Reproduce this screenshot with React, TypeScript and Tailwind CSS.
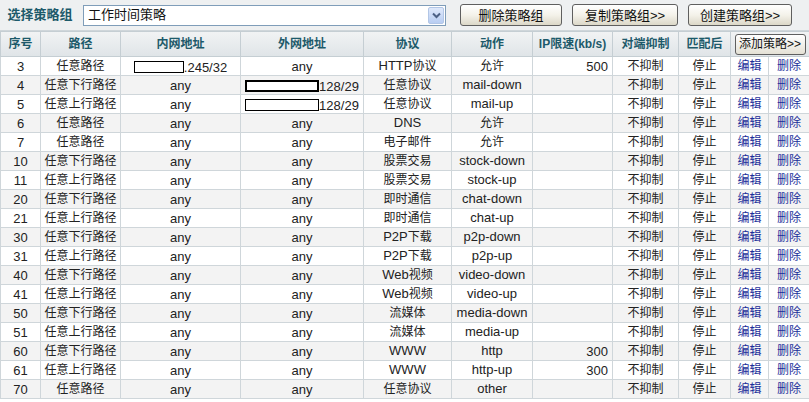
import React from "react";

type Row = {
  id: number;
  path: string;
  inner: React.ReactNode;
  outer: React.ReactNode;
  proto: string;
  action: string;
  limit?: string;
};

// latin runs a touch larger than the CJK ones, like the old Tahoma + SimSun mix
const Mixed = ({ s }: { s: string }) => (
  <>
    {s.split(/([\u4e00-\u9fff]+)/).map((part, i) =>
      /[\u4e00-\u9fff]/.test(part) ? (
        <span key={i} className="text-[12px]">{part}</span>
      ) : (
        <span key={i} className="text-[13px]">{part}</span>
      )
    )}
  </>
);

const Redacted = ({ w, thick, suffix }: { w: number; thick?: boolean; suffix: string }) => (
  <span className="inline-flex items-center h-[15px] leading-none align-middle">
    <span
      className={`inline-block h-[12px] bg-white border-black ${thick ? "border-2" : "border"}`}
      style={{ width: w }}
    />
    <span className="text-[13px]">{suffix}</span>
  </span>
);

const rows: Row[] = [
  { id: 3, path: "任意路径", inner: <Redacted w={50} suffix=".245/32" />, outer: "any", proto: "HTTP协议", action: "允许", limit: "500" },
  { id: 4, path: "任意下行路径", inner: "any", outer: <Redacted w={74} thick suffix="128/29" />, proto: "任意协议", action: "mail-down" },
  { id: 5, path: "任意上行路径", inner: "any", outer: <Redacted w={74} suffix="128/29" />, proto: "任意协议", action: "mail-up" },
  { id: 6, path: "任意路径", inner: "any", outer: "any", proto: "DNS", action: "允许" },
  { id: 7, path: "任意路径", inner: "any", outer: "any", proto: "电子邮件", action: "允许" },
  { id: 10, path: "任意下行路径", inner: "any", outer: "any", proto: "股票交易", action: "stock-down" },
  { id: 11, path: "任意上行路径", inner: "any", outer: "any", proto: "股票交易", action: "stock-up" },
  { id: 20, path: "任意下行路径", inner: "any", outer: "any", proto: "即时通信", action: "chat-down" },
  { id: 21, path: "任意上行路径", inner: "any", outer: "any", proto: "即时通信", action: "chat-up" },
  { id: 30, path: "任意下行路径", inner: "any", outer: "any", proto: "P2P下载", action: "p2p-down" },
  { id: 31, path: "任意上行路径", inner: "any", outer: "any", proto: "P2P下载", action: "p2p-up" },
  { id: 40, path: "任意下行路径", inner: "any", outer: "any", proto: "Web视频", action: "video-down" },
  { id: 41, path: "任意上行路径", inner: "any", outer: "any", proto: "Web视频", action: "video-up" },
  { id: 50, path: "任意下行路径", inner: "any", outer: "any", proto: "流媒体", action: "media-down" },
  { id: 51, path: "任意上行路径", inner: "any", outer: "any", proto: "流媒体", action: "media-up" },
  { id: 60, path: "任意下行路径", inner: "any", outer: "any", proto: "WWW", action: "http", limit: "300" },
  { id: 61, path: "任意上行路径", inner: "any", outer: "any", proto: "WWW", action: "http-up", limit: "300" },
  { id: 70, path: "任意路径", inner: "any", outer: "any", proto: "任意协议", action: "other" },
];

const XpButton = ({ children, className = "" }: { children: React.ReactNode; className?: string }) => (
  <button
    type="button"
    className={`h-[22px] rounded-[3px] border border-[#5f5f5f] bg-gradient-to-b from-white via-[#f4f2ea] to-[#dcd8c8] text-[13px] text-[#111] leading-none ${className}`}
  >
    {children}
  </button>
);

const th = "border border-[#c5ced3] text-[12px] font-bold text-[#1d5a6a] text-center align-middle";
const td = "border border-[#cfd6da] text-center align-middle whitespace-nowrap p-0 leading-[17px]";

export default function App() {
  return (
    <div className="w-[809px] h-[402px] overflow-hidden bg-white text-[12px] text-[#222] font-['Liberation_Sans','Noto_Sans_CJK_SC',sans-serif]">
      <div className="flex items-center h-[31px] bg-[#eef0f1] border-b border-[#cfd6da]">
        <span className="w-[80px] text-center text-[13px] font-bold text-[#1d5a6a]">选择策略组</span>
        <div className="flex items-center w-[363px] h-[21px] ml-[3px] bg-white border border-[#7f9db9]">
          <span className="flex-1 pl-[4px] text-[13px] text-[#111]">工作时间策略</span>
          <span className="flex items-center justify-center w-[16px] h-[17px] mr-[1px] rounded-[2px] border border-[#b2c6e6] bg-gradient-to-b from-[#dfe9fb] to-[#b8cdf2]">
            <svg width="9" height="7" viewBox="0 0 9 7">
              <path d="M1 1.5 L4.5 5 L8 1.5" fill="none" stroke="#4d6185" strokeWidth="2" />
            </svg>
          </span>
        </div>
        <XpButton className="w-[102px] ml-[14px]">删除策略组</XpButton>
        <XpButton className="w-[106px] ml-[10px]">复制策略组&gt;&gt;</XpButton>
        <XpButton className="w-[104px] ml-[10px]">创建策略组&gt;&gt;</XpButton>
      </div>
      <table className="table-fixed border-collapse w-[809px]">
        <colgroup>
          <col className="w-[40px]" />
          <col className="w-[80px]" />
          <col className="w-[120px]" />
          <col className="w-[123px]" />
          <col className="w-[88px]" />
          <col className="w-[81px]" />
          <col className="w-[80px]" />
          <col className="w-[66px]" />
          <col className="w-[52px]" />
          <col className="w-[38px]" />
          <col className="w-[41px]" />
        </colgroup>
        <thead>
          <tr className="h-[25px] bg-gradient-to-b from-[#f1f3f4] to-[#dfe4e7]">
            <th className={th}>序号</th>
            <th className={th}>路径</th>
            <th className={th}>内网地址</th>
            <th className={th}>外网地址</th>
            <th className={th}>协议</th>
            <th className={th}>动作</th>
            <th className={th}>IP限速(kb/s)</th>
            <th className={th}>对端抑制</th>
            <th className={th}>匹配后</th>
            <th colSpan={2} className={th}>
              <button
                type="button"
                className="h-[21px] w-[71px] rounded-[3px] border border-[#5f5f5f] bg-gradient-to-b from-white to-[#e4e1d5] text-[12px] font-normal text-[#111] leading-none"
              >
                添加策略&gt;&gt;
              </button>
            </th>
          </tr>
        </thead>
        <tbody>
          {rows.map((r, i) => (
            <tr key={r.id} className={`h-[19px] ${i % 2 === 1 ? "bg-[#f3f3f3]" : "bg-white"}`}>
              <td className={`${td} text-[13px]`}>{r.id}</td>
              <td className={td}>{r.path}</td>
              <td className={`${td} text-[13px]`}>{r.inner}</td>
              <td className={`${td} text-[13px]`}>{r.outer}</td>
              <td className={td}><Mixed s={r.proto} /></td>
              <td className={td}><Mixed s={r.action} /></td>
              <td className={`${td} text-[13px] text-right pr-[4px]`}>{r.limit ?? ""}</td>
              <td className={td}>不抑制</td>
              <td className={td}>停止</td>
              <td className={`${td} text-[#1b2f9a]`}>编辑</td>
              <td className={`${td} text-[#1b2f9a]`}>删除</td>
            </tr>
          ))}
        </tbody>
      </table>
    </div>
  );
}
